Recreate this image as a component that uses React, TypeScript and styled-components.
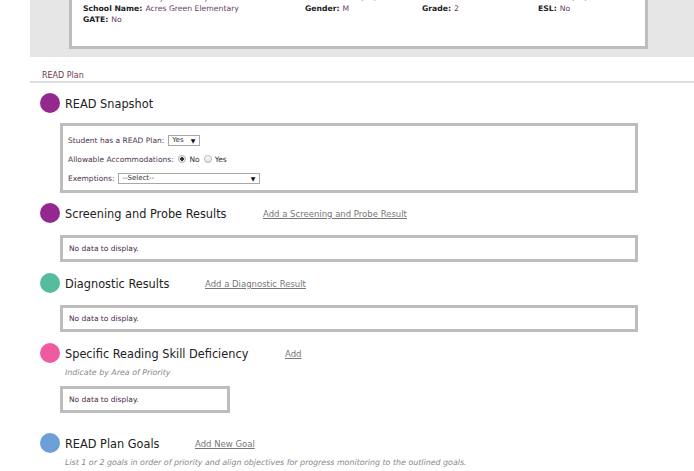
import React from "react";
import styled, { createGlobalStyle } from "styled-components";

const Global = createGlobalStyle`
  html, body { margin: 0; padding: 0; background: #fff; }
  body { font-family: "DejaVu Sans", Verdana, sans-serif; color: #333; overflow: hidden; }
`;

const Page = styled.div`
  width: 694px;
  height: 471px;
  overflow: hidden;
`;

const Band = styled.div`
  margin: -20px 0 0 30px;
  padding: 0 46px 8px 39px;
  background: #e6e6e6;
`;

const InfoCard = styled.div`
  background: #fff;
  border: 3px solid #bdbdbd;
  padding: 9px 11px 21px;
  display: grid;
  grid-template-columns: 222px 117px 116px 1fr;
  grid-auto-rows: 11px;
  font-size: 7.7px;
  line-height: 11px;
`;

const Field = styled.div`
  white-space: nowrap;
  color: #6a3a68;
`;

const Label = styled.b`
  color: #222;
  margin-right: 3px;
`;

const Crumb = styled.div`
  margin-left: 30px;
  padding: 13px 0 0 12px;
  height: 11px;
  font-size: 8px;
  line-height: 11px;
  color: #6b3a4f;
  border-bottom: 2px solid #dedede;
`;

const Main = styled.div`
  padding: 10px 0 0 40px;
`;

const Section = styled.section<{ $gapBelow: number }>`
  margin-bottom: ${(p) => p.$gapBelow}px;
`;

const Head = styled.div`
  display: flex;
  align-items: center;
  height: 20px;
`;

const Dot = styled.span<{ $color: string }>`
  width: 20px;
  height: 20px;
  border-radius: 50%;
  background: ${(p) => p.$color};
  flex: none;
`;

const Title = styled.h2<{ $width: number }>`
  margin: 0 0 0 5px;
  width: ${(p) => p.$width}px;
  font-family: "DejaVu Sans Condensed", "DejaVu Sans", sans-serif;
  font-stretch: condensed;
  font-size: 12.6px;
  font-weight: normal;
  color: #222;
  white-space: nowrap;
`;

const AddLink = styled.a`
  font-size: 8.5px;
  color: #777;
  text-decoration: underline;
  margin-top: 2px;
  white-space: nowrap;
`;

const Hint = styled.div`
  margin: 4px 0 0 25px;
  font-size: 7.9px;
  font-style: italic;
  color: #888;
  line-height: 12px;
  white-space: nowrap;
`;

const Box = styled.div<{ $width?: number; $top: number }>`
  margin: ${(p) => p.$top}px 0 0 20px;
  width: ${(p) => (p.$width ? `${p.$width}px` : "572px")};
  border: 3px solid #bdbdbd;
  background: #fff;
  font-size: 7.5px;
  color: #4a2a4a;
`;

const Empty = styled.div`
  height: 21px;
  line-height: 21px;
  padding-left: 6px;
`;

const Form = styled.div`
  height: 64px;
  padding: 8px 0 0 5px;
  box-sizing: border-box;
  display: flex;
  flex-direction: column;
  gap: 7px;
  color: #4d3450;
`;

const FormRow = styled.div`
  display: flex;
  align-items: center;
  height: 12px;
  white-space: nowrap;
`;

const FakeSelect = styled.span<{ $width: number }>`
  display: inline-flex;
  align-items: center;
  justify-content: space-between;
  box-sizing: border-box;
  width: ${(p) => p.$width}px;
  height: 11px;
  margin-left: 4px;
  padding: 0 4px 0 3px;
  border: 1px solid #a8a8a8;
  background: #fff;
  font-size: 7px;
  color: #333;
`;

const Arrow = styled.span`
  font-size: 6px;
  color: #111;
`;

const Radio = styled.span<{ $checked?: boolean }>`
  display: inline-block;
  box-sizing: border-box;
  width: 8px;
  height: 8px;
  border-radius: 50%;
  border: 1px solid #b5b5b5;
  background: ${(p) =>
    p.$checked ? "radial-gradient(circle, #333 0 1.6px, #eee 2px)" : "linear-gradient(#fff, #e4e4e4)"};
  margin: 0 3px 0 0;
`;

const RadioText = styled.span`
  margin-right: 4px;
  color: #333;
`;

const info: [string, string][] = [
  ["Student Name:", "Bryan Aakhanjan"],
  ["Birthdate:", "01/07/2009"],
  ["Student ID:", "20475"],
  ["DOB:", "01/07/2007"],
  ["School Name:", "Acres Green Elementary"],
  ["Gender:", "M"],
  ["Grade:", "2"],
  ["ESL:", "No"],
  ["GATE:", "No"],
];

export default function App() {
  return (
    <Page>
      <Global />
      <Band>
        <InfoCard>
          {info.map(([l, v], i) => (
            <Field key={i}>
              <Label>{l}</Label>
              {v}
            </Field>
          ))}
        </InfoCard>
      </Band>
      <Crumb>READ Plan</Crumb>
      <Main>
        <Section $gapBelow={10}>
          <Head>
            <Dot $color="#94288f" />
            <Title $width={200}>READ Snapshot</Title>
          </Head>
          <Box $top={10}>
            <Form>
              <FormRow>
                Student has a READ Plan:
                <FakeSelect $width={32}>
                  Yes <Arrow>▼</Arrow>
                </FakeSelect>
              </FormRow>
              <FormRow>
                Allowable Accommodations:&nbsp;&nbsp;
                <Radio $checked />
                <RadioText>No</RadioText>
                <Radio />
                <RadioText>Yes</RadioText>
              </FormRow>
              <FormRow>
                Exemptions:
                <FakeSelect $width={142}>
                  --Select-- <Arrow>▼</Arrow>
                </FakeSelect>
              </FormRow>
            </Form>
          </Box>
        </Section>

        <Section $gapBelow={11}>
          <Head>
            <Dot $color="#94288f" />
            <Title $width={198}>Screening and Probe Results</Title>
            <AddLink>Add a Screening and Probe Result</AddLink>
          </Head>
          <Box $top={12}>
            <Empty>No data to display.</Empty>
          </Box>
        </Section>

        <Section $gapBelow={11}>
          <Head>
            <Dot $color="#55bd9e" />
            <Title $width={140}>Diagnostic Results</Title>
            <AddLink>Add a Diagnostic Result</AddLink>
          </Head>
          <Box $top={12}>
            <Empty>No data to display.</Empty>
          </Box>
        </Section>

        <Section $gapBelow={20}>
          <Head>
            <Dot $color="#ee5ba0" />
            <Title $width={220}>Specific Reading Skill Deficiency</Title>
            <AddLink>Add</AddLink>
          </Head>
          <Hint>Indicate by Area of Priority</Hint>
          <Box $top={7} $width={164}>
            <Empty>No data to display.</Empty>
          </Box>
        </Section>

        <Section $gapBelow={0}>
          <Head>
            <Dot $color="#6b9fd6" />
            <Title $width={130}>READ Plan Goals</Title>
            <AddLink>Add New Goal</AddLink>
          </Head>
          <Hint>
            List 1 or 2 goals in order of priority and align objectives for progress monitoring to the outlined
            goals.
          </Hint>
        </Section>
      </Main>
    </Page>
  );
}
